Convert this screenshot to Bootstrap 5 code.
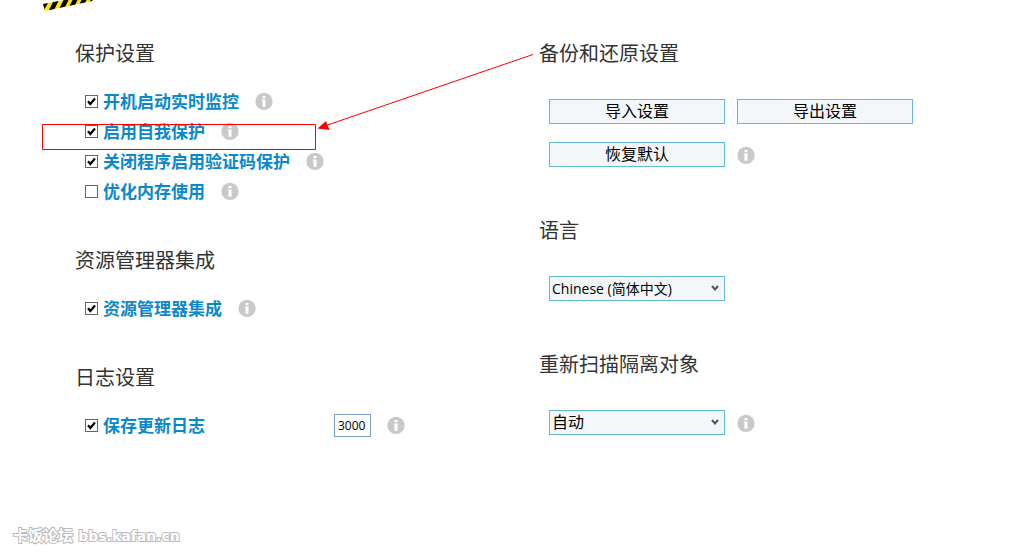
<!DOCTYPE html>
<html lang="zh-CN">
<head>
<meta charset="utf-8">
<meta name="viewport" content="width=device-width, initial-scale=1">
<title>设置</title>
<link href="https://cdn.jsdelivr.net/npm/bootstrap@5.3.0/dist/css/bootstrap.min.css" rel="stylesheet">
<style>
body { font-family: "Open Sans", "Noto Sans CJK SC", sans-serif; background: #fff; color: #000; }
.top-strip { height: 41px; padding-left: 43px; }
.settings { padding-left: 75px; padding-right: 19px; }
.settings h2 { font-family: "Noto Sans CJK SC", sans-serif; font-size: 20px; line-height: 24px; font-weight: 400; color: #333; margin: 0 0 21px; }
.toggles section { margin-bottom: 42px; }
.choices section { margin-bottom: 51px; }
.choices h2 { margin-bottom: 34px; }
.option-line { height: 30px; padding-left: 10px; gap: 16px; }
.option-line .form-check { gap: 5px; }
.option-line label { font-family: "Noto Sans CJK SC", sans-serif; font-size: 17px; line-height: 30px; font-weight: 700; color: #0a88cc; white-space: nowrap; }
.option-line .form-check-input { width: 13px; height: 13px; margin: 0; float: none; border: 1px solid #666; border-radius: 0; background-color: #fff; flex: none; }
.option-line .form-check-input:checked { background-color: #fff; border-color: #666; background-size: 11px 11px; background-image: url("data:image/svg+xml,%3Csvg xmlns='http://www.w3.org/2000/svg' viewBox='0 0 11 11'%3E%3Cpath d='M2 5.2 4.3 8 9 2.5' fill='none' stroke='%23000' stroke-width='2.2'/%3E%3C/svg%3E"); }
.log-check { min-width: 249px; margin-right: -16px; }
.log-count { width: 37px; height: 23px; padding: 0 3px; font-size: 12px; border: 1px solid #7a9cc4; border-radius: 0; color: #000; }
.info { width: 18px; height: 18px; flex: none; display: block; }
.controls { padding-left: 10px; gap: 18px 12px; }
.controls .btn, .controls .form-select { font-family: "Noto Sans CJK SC", sans-serif; width: 176px; height: 25px; padding: 0 2px 2px; font-size: 16px; line-height: 21px; border: 1px solid #62bad3; border-radius: 0; background-color: #f3f7f9; color: #000; }
.controls .form-select { background-image: url("data:image/svg+xml,%3Csvg xmlns='http://www.w3.org/2000/svg' viewBox='0 0 8 7'%3E%3Cpath d='M1 1 4 4.5 7 1' fill='none' stroke='%23555' stroke-width='2'/%3E%3C/svg%3E"); background-size: 8px 7px; background-position: right 5px center; }
.controls .language { font-family: "Open Sans", "Noto Sans CJK SC", sans-serif; font-size: 14px; padding-bottom: 0; }
.callout-arrow { left: 42px; top: 50px; pointer-events: none; }
.site-mark { padding: 0 0 9px 13px; font-family: "DejaVu Sans", "Noto Sans CJK SC", sans-serif; font-size: 15px; line-height: 24px; font-weight: 700; color: #fff; -webkit-text-stroke: 2px #bbb; paint-order: stroke fill; }
.site-mark span { font-size: 14px; }
</style>
</head>
<body>
<svg width="0" height="0" class="position-absolute" aria-hidden="true">
  <symbol id="info" viewBox="0 0 18 18"><circle cx="9" cy="9.400" r="8.600" fill="#c9c9c9"/><path d="M7.500 4h3v2.200h-3zM6.800 7.500h3.700v7.300h-3V8.600h-.7z" fill="#fff"/></symbol>
</svg>
<div class="position-relative min-vh-100 d-flex flex-column">
  <header class="top-strip">
    <svg class="d-block" width="52" height="12" viewBox="0 0 52 12" aria-hidden="true">
      <clipPath id="band"><path d="M0 4 21 0H50L49 1 2 11z"/></clipPath>
      <g clip-path="url(#band)"><path fill="#ffe500" d="M0 0h52v12H0z"/><path d="M0 3h5L1 10 0 9zM11 0h5L11 10H6zM21-1h5L21 9h-5zM31-3h5L31 7h-5zM41-5h5L41 5h-5zM50-3h5L49 5h-5z" fill="#000"/></g>
    </svg>
  </header>
  <main class="container-fluid settings">
    <div class="row g-0">
      <div class="col-6 toggles">
        <section>
          <h2>保护设置</h2>
          <div class="option-line d-flex align-items-center"><div class="form-check d-flex align-items-center p-0 m-0"><input class="form-check-input" type="checkbox" id="boot" checked><label for="boot">开机启动实时监控</label></div><svg class="info"><use href="#info"/></svg></div>
          <div class="option-line d-flex align-items-center"><div class="form-check d-flex align-items-center p-0 m-0"><input class="form-check-input" type="checkbox" id="self" checked><label for="self">启用自我保护</label></div><svg class="info"><use href="#info"/></svg></div>
          <div class="option-line d-flex align-items-center"><div class="form-check d-flex align-items-center p-0 m-0"><input class="form-check-input" type="checkbox" id="captcha" checked><label for="captcha">关闭程序启用验证码保护</label></div><svg class="info"><use href="#info"/></svg></div>
          <div class="option-line d-flex align-items-center"><div class="form-check d-flex align-items-center p-0 m-0"><input class="form-check-input" type="checkbox" id="memory"><label for="memory">优化内存使用</label></div><svg class="info"><use href="#info"/></svg></div>
        </section>
        <section>
          <h2>资源管理器集成</h2>
          <div class="option-line d-flex align-items-center"><div class="form-check d-flex align-items-center p-0 m-0"><input class="form-check-input" type="checkbox" id="explorer" checked><label for="explorer">资源管理器集成</label></div><svg class="info"><use href="#info"/></svg></div>
        </section>
        <section>
          <h2>日志设置</h2>
          <div class="option-line d-flex align-items-center"><div class="form-check log-check d-flex align-items-center p-0 my-0 ms-0"><input class="form-check-input" type="checkbox" id="log" checked><label for="log">保存更新日志</label></div><input class="form-control log-count" type="text" value="3000" aria-label="日志条数"><svg class="info"><use href="#info"/></svg></div>
        </section>
      </div>
      <div class="col-6 choices">
        <section>
          <h2>备份和还原设置</h2>
          <div class="controls d-flex flex-wrap align-items-center">
            <button type="button" class="btn">导入设置</button>
            <button type="button" class="btn">导出设置</button>
            <button type="button" class="btn">恢复默认</button>
            <svg class="info"><use href="#info"/></svg>
          </div>
        </section>
        <section>
          <h2 id="lang-title">语言</h2>
          <div class="controls d-flex align-items-center">
            <select class="form-select language" aria-labelledby="lang-title"><option>Chinese (简体中文)</option></select>
          </div>
        </section>
        <section>
          <h2 id="rescan-title">重新扫描隔离对象</h2>
          <div class="controls d-flex align-items-center">
            <select class="form-select" aria-labelledby="rescan-title"><option>自动</option></select>
            <svg class="info"><use href="#info"/></svg>
          </div>
        </section>
      </div>
    </div>
  </main>
  <footer class="site-mark mt-auto">卡饭论坛 <span>bbs.kafan.cn</span></footer>
  <svg class="callout-arrow position-absolute" width="494" height="102" viewBox="0 0 494 102" aria-hidden="true">
    <path d="M.5 74.5h273v25H.5zM491 4.5 284 75.5" fill="none" stroke="#f00"/>
    <path d="M275.5 78.5 284 71 287.5 80z" fill="#f00"/>
  </svg>
</div>
<script src="https://cdn.jsdelivr.net/npm/bootstrap@5.3.0/dist/js/bootstrap.bundle.min.js"></script>
</body>
</html>
